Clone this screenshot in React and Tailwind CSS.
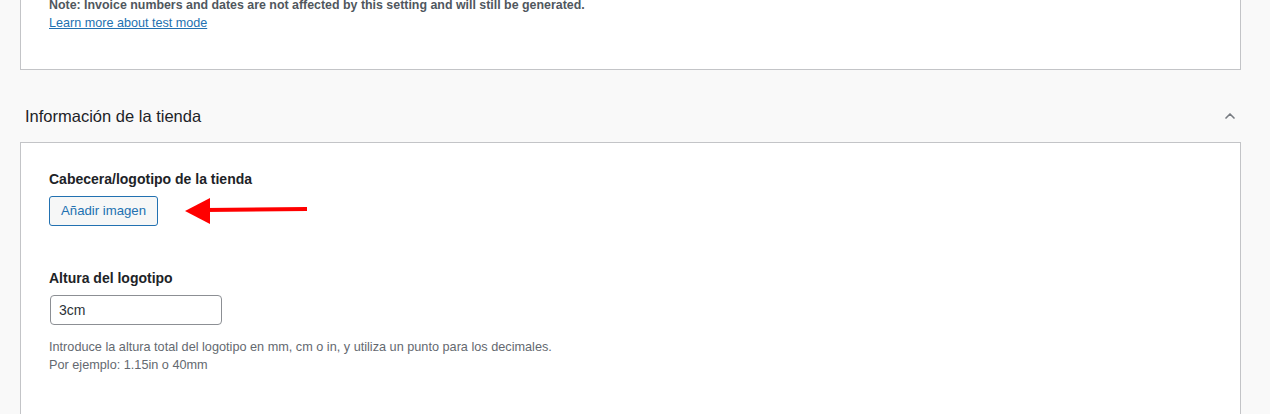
import { ChevronUp } from 'lucide-react';

const Arrow = () => (
    <svg width="124" height="30" viewBox="0 0 124 30" className="ml-[27px]">
        <line x1="20" y1="14" x2="122" y2="13" stroke="#ff0000" strokeWidth="4" />
        <polygon points="0,15 25,2 25,28" fill="#ff0000" />
    </svg>
);

const App = () => {
    return (
        <div className="min-h-[414px] bg-[#f9f9f9] font-['Liberation_Sans',Arial,sans-serif] overflow-hidden">
            {/* Previous section (tail) */}
            <div className="mx-[20px] w-[1221px] bg-white border-x border-b border-[#c3c4c7] pl-[28px] pb-[37px]">
                <p className="-mt-[4px] text-[12.4px] leading-[18px] font-bold text-[#50575e]">
                    Note: Invoice numbers and dates are not affected by this setting and will still be generated.
                </p>
                <a href="#" className="block w-fit text-[12.6px] leading-[18px] text-[#2271b1] underline">Learn more about test mode</a>
            </div>

            {/* Section header */}
            <div className="flex items-center justify-between w-[1221px] ml-[25px] pr-[8px] pt-[34px] pb-[14px]">
                <h2 className="text-[16.5px] leading-[24px] text-[#1d2327]">Información de la tienda</h2>
                <ChevronUp className="w-[16px] h-[16px] text-[#787c82]" strokeWidth={2.5} />
            </div>

            {/* Store info card */}
            <div className="mx-[20px] w-[1221px] bg-white border border-[#c3c4c7] pl-[28px] pt-[26px] pb-[40px]">
                <div className="text-[14px] leading-[20px] font-bold text-[#1d2327]">Cabecera/logotipo de la tienda</div>
                <div className="flex items-center mt-[7px]">
                    <button className="h-[30px] px-[11px] text-[13.2px] text-[#2271b1] bg-[#f6f7f7] border border-[#2271b1] rounded-[3px]">
                        Añadir imagen
                    </button>
                    <Arrow />
                </div>

                <div className="mt-[42px] text-[14px] leading-[20px] font-bold text-[#1d2327]">Altura del logotipo</div>
                <div className="mt-[7px] ml-[1px] w-[172px] h-[30px] border border-[#8c8f94] rounded-[4px] bg-white flex items-center px-[8px] text-[14px] text-[#2c3338]">
                    3cm
                </div>
                <p className="mt-[13px] text-[12.7px] leading-[18px] text-[#646970]">
                    Introduce la altura total del logotipo en mm, cm o in, y utiliza un punto para los decimales.
                    <br />
                    Por ejemplo: 1.15in o 40mm
                </p>
            </div>
        </div>
    );
};

export default App;
